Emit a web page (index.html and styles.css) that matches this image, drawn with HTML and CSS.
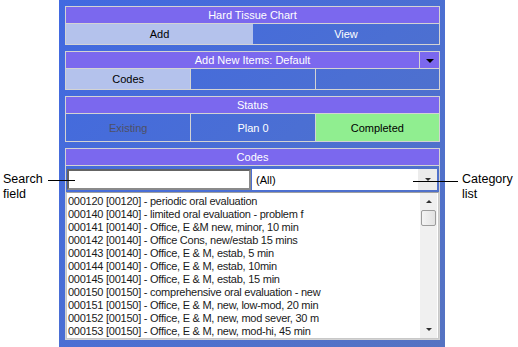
FILE: index.html
```html
<!DOCTYPE html>
<html lang="en">
<head>
    <meta charset="UTF-8">
    <title>Hard Tissue Chart</title>
    <link rel="stylesheet" href="styles.css">
</head>
<body>
    <div class="screen">
        <div class="note note-left">Search<br>field</div>

        <div class="panel">
            <div class="group">
                <div class="group-title">Hard Tissue Chart</div>
                <div class="tabs tabs-two">
                    <div class="tab tab-on">Add</div>
                    <div class="tab tab-white">View</div>
                </div>
            </div>

            <div class="group">
                <div class="group-title title-drop">
                    <span class="title-text">Add New Items: Default</span>
                    <span class="drop-btn"><span class="arrow-down"></span></span>
                </div>
                <div class="tabs tabs-three">
                    <div class="tab tab-on">Codes</div>
                    <div class="tab tab-line"></div>
                    <div class="tab tab-line"></div>
                </div>
            </div>

            <div class="group">
                <div class="group-title">Status</div>
                <div class="tabs tabs-three tabs-tall">
                    <div class="tab tab-disabled">Existing</div>
                    <div class="tab tab-line tab-white">Plan 0</div>
                    <div class="tab tab-line tab-done">Completed</div>
                </div>
            </div>

            <div class="group group-codes">
                <div class="group-title">Codes</div>
                <div class="search-row">
                    <div class="search-box"></div>
                    <div class="combo">
                        <span class="combo-text">(All)</span>
                        <span class="combo-btn"><span class="arrow-small"></span></span>
                    </div>
                </div>
                <div class="code-list">
                    <div class="code-items">
                        <div class="code">000120 [00120] - periodic oral evaluation</div>
                        <div class="code">000140 [00140] - limited oral evaluation - problem f</div>
                        <div class="code">000141 [00140] - Office, E &amp;M new, minor, 10 min</div>
                        <div class="code">000142 [00140] - Office Cons, new/estab 15 mins</div>
                        <div class="code">000143 [00140] - Office, E &amp; M, estab, 5 min</div>
                        <div class="code">000144 [00140] - Office, E &amp; M, estab, 10min</div>
                        <div class="code">000145 [00140] - Office, E &amp; M, estab, 15 min</div>
                        <div class="code">000150 [00150] - comprehensive oral evaluation - new</div>
                        <div class="code">000151 [00150] - Office, E &amp; M, new, low-mod, 20 min</div>
                        <div class="code">000152 [00150] - Office, E &amp; M, new, mod sever, 30 m</div>
                        <div class="code">000153 [00150] - Office, E &amp; M, new, mod-hi, 45 min</div>
                    </div>
                    <div class="scrollbar">
                        <div class="scroll-btn"><span class="arrow-up"></span></div>
                        <div class="scroll-track">
                            <div class="scroll-thumb"></div>
                        </div>
                        <div class="scroll-btn"><span class="arrow-small"></span></div>
                    </div>
                </div>
            </div>
        </div>

        <div class="note note-right">Category<br>list</div>

        <!-- callout lines -->
        <span class="leader leader-left"></span>
        <span class="leader leader-right"></span>
    </div>
</body>
</html>
```

FILE: styles.css
```css
/* Basic Reset */
* {
    margin: 0;
    padding: 0;
    box-sizing: border-box;
}

body {
    background-color: #ffffff;
    font-family: 'Liberation Sans', Arial, sans-serif;
    font-size: 11px;
    color: #000000;
}

.screen {
    position: relative;
    display: flex;
    width: 518px;
    height: 347px;
    overflow: hidden;
}

/* Callout labels */
.note {
    font-size: 12.5px;
    line-height: 15px;
    color: #000000;
    padding-top: 172px;
}

.note-left {
    width: 59px;
    padding-left: 3px;
}

.note-right {
    padding-left: 17px;
}

.leader {
    position: absolute;
    height: 1px;
    background-color: #000000;
}

.leader-left {
    left: 48px;
    top: 180px;
    width: 27px;
}

.leader-right {
    left: 413px;
    top: 181px;
    width: 45px;
}

/* Blue window */
.panel {
    width: 386px;
    height: 347px;
    padding: 6px 5px 7px 6px;
    background: linear-gradient(135deg, #4169e1 0%, #4b6fd3 50%, #5573c2 100%);
    display: flex;
    flex-direction: column;
    gap: 6px;
}

.group {
    border: 1px solid #d3d3d3;
    display: flex;
    flex-direction: column;
}

.group-title {
    height: 17px;
    background-color: #7b68ee;
    color: #ffffff;
    border-bottom: 1px solid #d3d3d3;
    display: flex;
    align-items: center;
    justify-content: center;
}

.title-drop {
    display: grid;
    grid-template-columns: 1fr 20px;
}

.title-text {
    grid-row: 1;
    grid-column: 1 / -1;
    text-align: center;
}

.drop-btn {
    grid-row: 1;
    grid-column: 2;
    height: 100%;
    border-left: 1px solid #d3d3d3;
    display: flex;
    align-items: center;
    justify-content: center;
}

.arrow-down {
    width: 0;
    height: 0;
    border-left: 4px solid transparent;
    border-right: 4px solid transparent;
    border-top: 4px solid #000000;
    margin-top: 1px;
}

.tabs {
    display: grid;
    height: 20px;
}

.tabs-two {
    grid-template-columns: 187px 1fr;
}

.tabs-three {
    grid-template-columns: 1fr 1fr 1fr;
}

.tabs-tall {
    height: 27px;
}

.tab {
    display: flex;
    align-items: center;
    justify-content: center;
}

.tab-line {
    border-left: 1px solid #d3d3d3;
}

.tab-on {
    background-color: #b4c2ec;
    color: #000000;
}

.tab-white {
    color: #ffffff;
}

.tab-disabled {
    color: #4e5066;
}

.tab-done {
    background-color: #90ee90;
    color: #000000;
}

/* Codes box */
.group-codes {
    flex: 1;
    min-height: 0;
}

.search-row {
    display: grid;
    grid-template-columns: 184px 1fr;
    gap: 1px;
    padding: 3px 2px 2px 1px;
}

.search-box {
    height: 21px;
    background-color: #ffffff;
    border: 2px solid #646464;
    border-right-color: #8a8a8a;
    border-bottom-color: #8a8a8a;
}

.combo {
    height: 21px;
    background-color: #ffffff;
    display: flex;
    align-items: center;
}

.combo-text {
    flex: 1;
    padding-left: 4px;
}

.combo-btn {
    width: 19px;
    height: 100%;
    background-color: #ececec;
    display: flex;
    align-items: center;
    justify-content: center;
}

.arrow-small {
    width: 0;
    height: 0;
    border-left: 3px solid transparent;
    border-right: 3px solid transparent;
    border-top: 3px solid #303030;
}

.arrow-up {
    width: 0;
    height: 0;
    border-left: 3px solid transparent;
    border-right: 3px solid transparent;
    border-bottom: 3px solid #303030;
}

.code-list {
    flex: 1;
    min-height: 0;
    display: flex;
    background-color: #ffffff;
    border: 1px solid #c8c8c8;
    border-top-color: #a0a0a0;
}

.code-items {
    flex: 1;
    overflow: hidden;
    padding: 2px 0 0 1px;
}

.code {
    height: 13px;
    line-height: 13px;
    white-space: nowrap;
    letter-spacing: -0.25px;
    color: #1a1a1a;
}

.scrollbar {
    width: 17px;
    margin-right: 1px;
    background-color: #f0f0f0;
    display: flex;
    flex-direction: column;
}

.scroll-btn {
    height: 17px;
    display: flex;
    align-items: center;
    justify-content: center;
}

.scroll-track {
    flex: 1;
}

.scroll-thumb {
    height: 16px;
    margin: 0 1px;
    border: 1px solid #9c9c9c;
    border-radius: 2px;
    background: linear-gradient(to right, #f4f4f4, #e2e2e2);
}
```
